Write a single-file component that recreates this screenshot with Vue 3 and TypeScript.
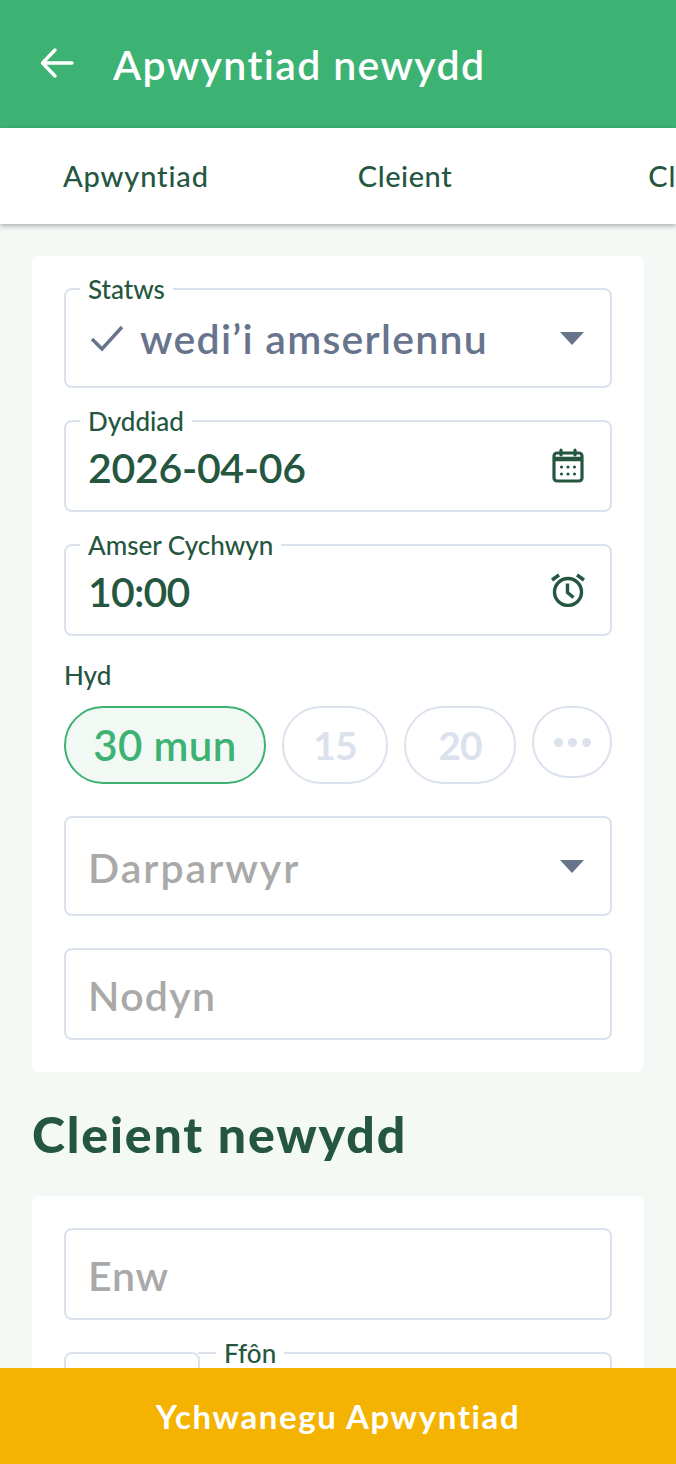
<script setup lang="ts">
const chips = [
  { label: '15', cls: 'c15' },
  { label: '20', cls: 'c20' },
];
</script>

<template>
  <div class="page">
    <header class="bar">
      <svg class="back" viewBox="0 0 36 32" width="36" height="32" fill="none" stroke="#fff" stroke-width="3.4" stroke-linecap="round" stroke-linejoin="round">
        <path d="M33 16H4M16 3 3.500 16 16 29" />
      </svg>
      <h1>Apwyntiad newydd</h1>
    </header>
    <nav class="tabs">
      <span class="tab t1">Apwyntiad</span>
      <span class="tab t2">Cleient</span>
      <span class="tab t3">Cleient</span>
    </nav>
    <main class="content">
      <section class="card">
        <div class="field h100">
          <span class="legend">Statws</span>
          <svg class="check" viewBox="0 0 34 28" width="34" height="28" fill="none" stroke="#68748c" stroke-width="3.4"><path d="M2 15 12 25 32 3" /></svg>
          <span class="value status">wedi’i amserlennu</span>
          <span class="caret"></span>
        </div>
        <div class="field h92">
          <span class="legend">Dyddiad</span>
          <span class="value dark date">2026-04-06</span>
          <svg class="icon cal" viewBox="0 0 32 36" width="32" height="36" fill="none">
            <rect x="2" y="5" width="28" height="28" rx="3" stroke="#25563f" stroke-width="3.200" />
            <path d="M2 11h28" stroke="#25563f" stroke-width="4.500" />
            <path d="M9 2v5M23 2v5" stroke="#25563f" stroke-width="3.200" stroke-linecap="round" />
            <g fill="#25563f">
              <circle cx="9.500" cy="19" r="1.600" /><circle cx="16" cy="19" r="1.600" /><circle cx="22.500" cy="19" r="1.600" />
              <circle cx="9.500" cy="26" r="1.600" /><circle cx="16" cy="26" r="1.600" /><circle cx="22.500" cy="26" r="1.600" />
            </g>
          </svg>
        </div>
        <div class="field h92">
          <span class="legend">Amser Cychwyn</span>
          <span class="value dark time">10:00</span>
          <svg class="icon alarm" viewBox="0 0 36 34" width="36" height="34" fill="none" stroke="#25563f" stroke-width="3.400">
            <circle cx="18" cy="19" r="13.500" />
            <path d="M17.500 10.500v9l6 5" stroke-linejoin="miter" />
            <path d="M2 7 9 2M34 7 27 2" />
          </svg>
        </div>
        <div class="duration">
          <span class="hyd">Hyd</span>
          <div class="chips">
            <span class="chip active">30 mun</span>
            <span v-for="c in chips" :key="c.label" class="chip" :class="c.cls">{{ c.label }}</span>
            <span class="chip more"><i></i><i></i><i></i></span>
          </div>
        </div>
        <div class="field h100">
          <span class="value ph darp">Darparwyr</span>
          <span class="caret"></span>
        </div>
        <div class="field h92">
          <span class="value ph">Nodyn</span>
        </div>
      </section>
      <h2>Cleient newydd</h2>
      <section class="card">
        <div class="field h92">
          <span class="value ph enw">Enw</span>
        </div>
        <div class="phone">
          <div class="field code"></div>
          <div class="field grow">
            <span class="legend phone-legend">Ffôn</span>
          </div>
        </div>
      </section>
    </main>
    <footer class="cta">Ychwanegu Apwyntiad</footer>
  </div>
</template>

<style>
html, body { margin: 0; padding: 0; }
</style>

<style scoped>
.page {
  position: relative;
  width: 676px;
  height: 1464px;
  overflow: hidden;
  background: #f4f9f6;
  font-family: Lato, "Noto Sans", sans-serif;
  color: #25563f;
}
.bar {
  height: 128px;
  background: #3cb273;
  display: flex;
  align-items: center;
  padding-left: 39px;
  gap: 38px;
  box-sizing: border-box;
}
.bar h1 {
  margin: 0;
  color: #fff;
  font-size: 41px;
  font-weight: 600;
  letter-spacing: 1.35px;
  line-height: 1;
}
.back { flex: none; margin-top: -2px; }
.tabs {
  position: relative;
  height: 96px;
  background: #fff;
  box-shadow: 0 2px 5px rgba(0, 0, 0, 0.3);
  display: flex;
  align-items: center;
  overflow: hidden;
  white-space: nowrap;
}
.tab { font-size: 29px; font-weight: 500; letter-spacing: 0.85px; flex: none; margin-top: -2px; }
.t1 { margin-left: 63px; }
.t2 { margin-left: 149px; letter-spacing: 0.55px; }
.t3 { margin-left: 196px; }
.content { padding: 32px 32px 0; }
.card {
  background: #fff;
  border-radius: 8px;
  padding: 32px;
  display: flex;
  flex-direction: column;
  gap: 32px;
}
.field {
  position: relative;
  box-sizing: border-box;
  border: 2px solid #dbe2ed;
  border-radius: 8px;
  display: flex;
  align-items: center;
  padding: 0 22px;
}
.h100 { height: 100px; }
.h92 { height: 92px; }
.legend {
  position: absolute;
  top: -16px;
  left: 14px;
  background: #fff;
  padding: 0 8px;
  font-size: 26px;
  line-height: 30px;
  font-weight: 500;
}
.phone-legend { left: 18px; }
.value { font-size: 41px; line-height: 1; font-weight: 600; padding-top: 2px; }
.dark { font-weight: 600; }
.date { letter-spacing: -0.3px; }
.time { letter-spacing: -0.8px; }
.status { color: #68748c; margin-left: 16px; letter-spacing: 1.25px; padding-top: 0; }
.ph { color: #a9a9a9; letter-spacing: 1.3px; }
.darp { letter-spacing: 2px; }
.enw { letter-spacing: 0.8px; }
.check { flex: none; margin-left: 2px; }
.caret {
  margin-left: auto;
  margin-right: 4px;
  width: 0;
  height: 0;
  border-left: 12px solid transparent;
  border-right: 12px solid transparent;
  border-top: 13px solid #68748c;
}
.icon { margin-left: auto; flex: none; }
.cal { margin-right: 4px; }
.alarm { margin-right: 2px; }
.duration { display: flex; flex-direction: column; gap: 16px; margin-top: -8px; }
.hyd { font-size: 26px; line-height: 30px; font-weight: 500; }
.chips { display: flex; gap: 16px; align-items: flex-start; }
.chip {
  box-sizing: border-box;
  height: 78px;
  border: 2px solid #dbe2ed;
  border-radius: 39px;
  display: flex;
  align-items: center;
  justify-content: center;
  font-size: 39px;
  font-weight: 700;
  letter-spacing: -0.8px;
  color: #dbe2ed;
}
.active { width: 202px; border-color: #3cb273; background: #f2f9f5; color: #3cb273; font-size: 42px; font-weight: 600; letter-spacing: 0.4px; }
.c15 { width: 106px; }
.c20 { width: 112px; }
.more { width: 80px; height: 72px; gap: 5px; border-radius: 36px; }
.more i { width: 9px; height: 9px; border-radius: 50%; background: #dbe2ed; }
h2 {
  margin: 0;
  height: 124px;
  display: flex;
  align-items: center;
  font-size: 50px;
  font-weight: 900;
  letter-spacing: 1.85px;
}
.phone { display: flex; }
.code { width: 136px; height: 92px; flex: none; }
.grow { flex: 1; height: 92px; margin-left: -2px; border-left: none; border-top-left-radius: 0; }
.cta {
  position: absolute;
  left: 0;
  right: 0;
  bottom: 0;
  height: 96px;
  background: #f5b301;
  color: #fff;
  display: flex;
  align-items: center;
  justify-content: center;
  font-size: 33px;
  font-weight: 700;
  letter-spacing: 1.6px;
}
</style>
